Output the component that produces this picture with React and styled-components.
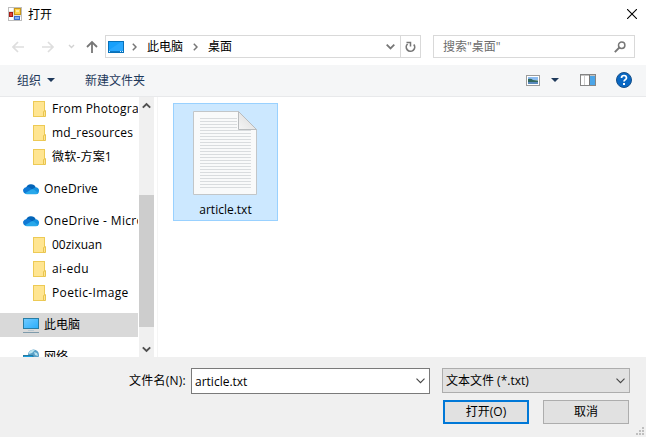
import React from "react";
import styled, { createGlobalStyle } from "styled-components";

const Global = createGlobalStyle`
  * { box-sizing: border-box; }
  html, body { margin: 0; padding: 0; overflow: hidden; background: #fff; }
  body { font: 12px/16px "Open Sans", "Noto Sans CJK SC", sans-serif; color: #000; }
  svg { display: block; flex: none; }
`;

const Dialog = styled.div`
  width: 646px;
  height: 437px;
  display: flex;
  flex-direction: column;
  background: #fff;
  overflow: hidden;
`;

const Text = styled.span`
  white-space: nowrap;
  letter-spacing: ${(p) => p.$track || 0}px;
  margin-left: ${(p) => p.$gap || 0}px;
  padding-top: ${(p) => p.$drop || 0}px;
`;

const TitleBar = styled.header`
  height: 28px;
  flex: none;
  display: flex;
  align-items: center;
  padding: 0 9px 0 8px;
`;

const CloseIcon = styled.svg`
  margin-left: auto;
`;

const AddressRow = styled.div`
  height: 37px;
  flex: none;
  display: flex;
  align-items: center;
  padding: 0 11px 0 12px;
`;

const NavArrows = styled.div`
  width: 93px;
  flex: none;
`;

const AddressBox = styled.div`
  width: 316px;
  height: 23px;
  border: 1px solid #d9d9d9;
  display: flex;
  align-items: center;
  padding-left: 2px;
`;

const Chevron = styled.svg`
  margin-left: ${(p) => p.$left}px;
`;

const Refresh = styled.div`
  width: 20px;
  height: 21px;
  margin-left: auto;
  border-left: 1px solid #d9d9d9;
  display: flex;
  align-items: center;
  justify-content: center;
`;

const SearchBox = styled.div`
  width: 202px;
  height: 23px;
  margin-left: 12px;
  border: 1px solid #d9d9d9;
  display: flex;
  align-items: center;
  justify-content: space-between;
  padding: 0 8px 0 9px;
  color: #6d6d6d;
`;

const Toolbar = styled.div`
  height: 32px;
  flex: none;
  display: flex;
  align-items: center;
  padding: 0 14px 1px 17px;
  background: #f5f6f7;
  border-bottom: 1px solid #e8e9eb;
  color: #1e395b;
`;

const ToolbarIcons = styled.div`
  margin-left: auto;
  display: flex;
  align-items: center;
`;

const Caret = styled.span`
  width: 0;
  height: 0;
  border: 4px solid transparent;
  border-top-color: #1e395b;
  border-bottom: 0;
  margin: 0 ${(p) => p.$right || 0}px 0 ${(p) => p.$left}px;
`;

const Body = styled.main`
  height: 260px;
  flex: none;
  display: flex;
  overflow: hidden;
`;

const Tree = styled.nav`
  width: 138px;
  flex: none;
  overflow: hidden;
`;

const TreeRow = styled.div`
  height: 24px;
  margin-top: ${(p) => (p.$spaced ? 8 : 0)}px;
  padding-left: ${(p) => (p.$child ? 33 : 23)}px;
  display: flex;
  align-items: center;
  gap: ${(p) => (p.$child ? 6 : 5)}px;
  background: ${(p) => (p.$selected ? "#d9d9d9" : "transparent")};
`;

const Scrollbar = styled.div`
  width: 15px;
  margin-left: 1px;
  flex: none;
  background: #f0f0f0;
  display: flex;
  flex-direction: column;
  align-items: center;
  justify-content: space-between;
  padding: 5px 0 4px;
`;

const Thumb = styled.div`
  width: 15px;
  height: 132px;
  margin-top: 66px;
  background: #cdcdcd;
`;

const Files = styled.section`
  flex: 1;
  margin-left: 3px;
  border-left: 1px solid #f5f5f5;
  padding: 6px 0 0 15px;
`;

const FileTile = styled.div`
  width: 105px;
  height: 118px;
  background: #cce8ff;
  border: 1px solid #99d1ff;
  display: flex;
  flex-direction: column;
  align-items: center;
  padding: 7px 1px 0 0;
  gap: 6px;
`;

const Footer = styled.footer`
  flex: 1;
  background: #f0f0f0;
  display: flex;
  flex-direction: column;
  position: relative;
`;

const FieldRow = styled.div`
  display: flex;
  padding: 11px 0 0 129px;
  height: 43px;
`;

const FieldLabel = styled.label`
  width: 62px;
  padding-top: 5px;
`;

const Combo = styled.div`
  width: 239px;
  height: 26px;
  background: #fff;
  border: 1px solid #7a7a7a;
  display: flex;
  align-items: center;
  justify-content: space-between;
  padding: 0 4px 0 3px;
`;

const FilterSelect = styled(Combo)`
  width: 188px;
  height: 25px;
  margin-left: 12px;
  background: #e1e1e1;
  border-color: #adadad;
`;

const Buttons = styled.div`
  display: flex;
  gap: 14px;
  padding-left: 443px;
`;

const Button = styled.button`
  width: 86px;
  height: 24px;
  padding: 0 0 1px;
  font: inherit;
  color: #000;
  background: #e1e1e1;
  border: ${(p) => (p.$primary ? "2px solid #0078d7" : "1px solid #adadad")};
  display: flex;
  align-items: center;
  justify-content: center;
`;

const Grip = styled.svg`
  position: absolute;
  right: 2px;
  bottom: 2px;
`;

const FormIcon = () => (
  <svg width="14" height="14" viewBox="0 0 14 14">
    <rect x=".5" y=".5" width="13" height="13" fill="#fff" stroke="#bdbdbd" />
    <path d="M6 1v12M1 5h5M6 9h7" stroke="#c9c9c9" />
    <rect x="1.5" y="5.5" width="3" height="4" fill="#e04438" stroke="#a51d16" />
    <rect x="6.5" y="1.5" width="6" height="6" fill="#ffd24a" stroke="#c8971b" />
    <path d="M8 3h3v2H8z" fill="#ffeaa2" />
    <rect x="6.5" y="9.5" width="5" height="3" fill="#82aef5" stroke="#3c6dcd" />
  </svg>
);

const Folder = () => (
  <svg width="13" height="16" viewBox="0 0 13 16">
    <rect x=".5" y=".5" width="11" height="15" fill="#ffe591" stroke="#edca55" />
    <path d="M10.5 15.5v-5l2-.9v5.9z" fill="#ffe591" stroke="#e8c44f" />
  </svg>
);

const Cloud = () => (
  <svg width="16" height="12" viewBox="0 0 16 12">
    <path d="M3 5A5.200 5.200 0 0 1 12.800 4.500L10 8z" fill="#0364b8" />
    <path d="M3.600 11A3.600 3.600 0 0 1 .2 6.500Q1.500 3 6 4.300L12 8l-3 3z" fill="#0f78d4" />
    <path d="M8.500 6.500 12.200 4.400A3.200 3.200 0 0 1 16 8q0 2-1.500 3z" fill="#1490df" />
    <path d="M1.500 10.500 8.200 6.600q1.500-.8 3 .2l4 3.400Q14.200 11.300 13 11.300H4Q2.500 11.300 1.500 10.500z" fill="#28a8ea" />
  </svg>
);

const Computer = () => (
  <svg width="16" height="16" viewBox="0 0 16 16">
    <defs>
      <linearGradient id="screen" x1="0" y1="0" x2="1" y2="1">
        <stop offset="0" stopColor="#72cbff" />
        <stop offset="1" stopColor="#29adfb" />
      </linearGradient>
    </defs>
    <rect x=".5" y="1.500" width="15" height="10" fill="url(#screen)" stroke="#287da4" />
    <path d="M5 13.500h6" stroke="#b9c9d2" />
    <path d="M0 15.500h16" stroke="#7f9bab" />
  </svg>
);

const Globe = () => (
  <svg width="16" height="16" viewBox="0 0 16 16">
    <circle cx="10.500" cy="6" r="5.500" fill="#589fc6" />
    <path d="M6 3q3-3 6-2L9 4 6 5zM11 3l3 1 1 3-3-1z" fill="#b9e3ef" />
    <path d="M0 6.500h10V14H0z" fill="#169dde" stroke="#27799e" />
  </svg>
);

const Desktop = () => (
  <svg width="16" height="12" viewBox="0 0 16 12">
    <rect x=".5" y=".5" width="15" height="11" fill="#18a0fb" stroke="#0871b9" />
    <path d="M1 9 13 1h2v9H1z" fill="#32acff" opacity=".65" />
    <path d="M1 10.500h14" stroke="#0d78c4" />
    <path d="M1 10.500h1M12 10.500h1M14 10.500h1" stroke="#d9efff" />
  </svg>
);

const Document = () => (
  <svg width="64" height="84" viewBox="0 0 64 84">
    <defs>
      <linearGradient id="fold" x1="0" y1="1" x2="1" y2="0">
        <stop offset="0" stopColor="#f5f5f5" />
        <stop offset="1" stopColor="#d8d8d8" />
      </linearGradient>
    </defs>
    <path d="M.5.5h45l18 18v65H.5z" fill="#f9fafa" stroke="#c2c6c8" />
    {Array.from({ length: 24 }, (_, i) => (
      <path key={i} d={`M7 ${7.5 + i * 3}H${i < 4 ? 44 : 58}`} stroke="#d9dcde" />
    ))}
    <path d="M45.500.5v18h18z" fill="url(#fold)" stroke="#b9bcbe" />
  </svg>
);

const Down = () => (
  <svg width="9" height="6" viewBox="0 0 9 6">
    <path d="M.5.7 4.500 4.700 8.500.7" fill="none" stroke="#444" strokeWidth="1.100" />
  </svg>
);

const Crumb = ({ left }) => (
  <Chevron $left={left} width="5" height="8" viewBox="0 0 5 8">
    <path d="M.8.8 4 4 .8 7.200" fill="none" stroke="#777" strokeWidth="1.500" />
  </Chevron>
);

const treeItems = [
  { text: "From Photogra", icon: Folder, child: true, track: 0.22 },
  { text: "md_resources", icon: Folder, child: true, track: 0.2 },
  { text: "微软-方案1", icon: Folder, child: true, track: 0.2 },
  { text: "OneDrive", icon: Cloud, spaced: true, track: 0.15 },
  { text: "OneDrive - Micro", icon: Cloud, spaced: true, track: 0.35 },
  { text: "00zixuan", icon: Folder, child: true },
  { text: "ai-edu", icon: Folder, child: true, track: 0.3 },
  { text: "Poetic-Image", icon: Folder, child: true, track: 0.35 },
  { text: "此电脑", icon: Computer, spaced: true, selected: true },
  { text: "网络", icon: Globe, spaced: true },
];

export default function App() {
  return (
    <Dialog>
      <Global />
      <TitleBar>
        <FormIcon />
        <Text $gap={6} $drop={2}>打开</Text>
        <CloseIcon width="10" height="10" viewBox="0 0 10 10">
          <path d="M0 0 10 10M10 0 0 10" stroke="#000" strokeWidth="1.100" />
        </CloseIcon>
      </TitleBar>

      <AddressRow>
        <NavArrows>
          <svg width="88" height="14" viewBox="0 0 88 14" fill="none">
            <path d="M12 7H1M6 2 1 7l5 5M30 7h11M36 2l5 5-5 5" stroke="#dedede" strokeWidth="1.700" />
            <path d="M57 5l2.500 2.500L62 5" stroke="#d2d2d2" strokeWidth="1.400" />
            <path d="M80 13V2M75 7l5-5 5 5" stroke="#777" strokeWidth="1.800" />
          </svg>
        </NavArrows>
        <AddressBox>
          <Desktop />
          <Crumb left={8} />
          <Text $gap={10}>此电脑</Text>
          <Crumb left={10} />
          <Text $gap={10}>桌面</Text>
          <Chevron $left={154} width="9" height="6" viewBox="0 0 9 6">
            <path d="M.7.7 4.500 4.500 8.300.7" fill="none" stroke="#777" strokeWidth="1.800" />
          </Chevron>
          <Refresh>
            <svg width="11" height="12" viewBox="0 0 11 12" fill="none" stroke="#777">
              <path d="M2.600 3A4.200 4.200 0 1 0 8.800 3.500" strokeWidth="1.700" />
              <path d="M1.500 1.500h4v4" strokeWidth="1.500" />
            </svg>
          </Refresh>
        </AddressBox>
        <SearchBox>
          <Text>搜索"桌面"</Text>
          <svg width="12" height="12" viewBox="0 0 12 12" fill="none" stroke="#777">
            <circle cx="7.700" cy="4.200" r="3.200" strokeWidth="1.500" />
            <path d="M5.400 6.500.8 11.100" strokeWidth="1.900" />
          </svg>
        </SearchBox>
      </AddressRow>

      <Toolbar>
        <Text $drop={2}>组织</Text>
        <Caret $left={6} />
        <Text $gap={30} $drop={2}>新建文件夹</Text>
        <ToolbarIcons>
          <svg width="14" height="11" viewBox="0 0 14 11">
            <rect x=".5" y=".5" width="13" height="10" fill="#fff" stroke="#9b9b9b" />
            <path d="M2 2h10v3H2z" fill="#8cbcf0" />
            <path d="M2 4q3-1 5 1l5 .5V7H2z" fill="#31675d" />
            <path d="M2 7h10v2H2z" fill="#5989bd" />
          </svg>
          <Caret $left={11} $right={21} />
          <svg width="16" height="12" viewBox="0 0 16 12">
            <rect x=".5" y=".5" width="15" height="11" fill="#fff" stroke="#858585" />
            <path d="M1 1h14" stroke="#858585" />
            <path d="M4.500 2v9" stroke="#ccc" />
            <path d="M10 2h5v9h-5z" fill="#4ba5e8" />
            <path d="M9.500 1v10" stroke="#777" />
          </svg>
          <Chevron $left={20} width="16" height="16" viewBox="0 0 16 16">
            <circle cx="8" cy="8" r="7.500" fill="#0867c3" stroke="#164f89" />
            <path d="M5.500 6q0-2.500 2.500-2.500T10.500 6q0 1-1.300 1.800Q8 8.600 8 9.500" fill="none" stroke="#fff" strokeWidth="1.700" />
            <path d="M7 11h2v2H7z" fill="#fff" />
          </Chevron>
        </ToolbarIcons>
      </Toolbar>

      <Body>
        <Tree>
          {treeItems.map(({ text, icon: Icon, child, spaced, selected, track }) => (
            <TreeRow key={text} $child={child} $spaced={spaced} $selected={selected}>
              <Icon />
              <Text $track={track}>{text}</Text>
            </TreeRow>
          ))}
        </Tree>
        <Scrollbar>
          <svg width="9" height="7" viewBox="0 0 9 7">
            <path d="M.8 5.700 4.500 2 8.200 5.700" fill="none" stroke="#505050" strokeWidth="1.900" />
          </svg>
          <Thumb />
          <svg width="9" height="7" viewBox="0 0 9 7">
            <path d="M.8 1.300 4.500 5 8.200 1.300" fill="none" stroke="#505050" strokeWidth="1.900" />
          </svg>
        </Scrollbar>
        <Files>
          <FileTile>
            <Document />
            <Text $drop={1} $gap={1}>article.txt</Text>
          </FileTile>
        </Files>
      </Body>

      <Footer>
        <FieldRow>
          <FieldLabel><Text $track={0.25}>文件名(N):</Text></FieldLabel>
          <Combo>
            <Text $drop={2}>article.txt</Text>
            <Down />
          </Combo>
          <FilterSelect>
            <Text>文本文件 (*.txt)</Text>
            <Down />
          </FilterSelect>
        </FieldRow>
        <Buttons>
          <Button $primary>打开(O)</Button>
          <Button>取消</Button>
        </Buttons>
        <Grip width="8" height="8" viewBox="0 0 8 8">
          <path d="M6 0h2v2H6zM3 3h2v2H3zM6 3h2v2H6zM0 6h2v2H0zM3 6h2v2H3zM6 6h2v2H6z" fill="#bfbfbf" />
        </Grip>
      </Footer>
    </Dialog>
  );
}
